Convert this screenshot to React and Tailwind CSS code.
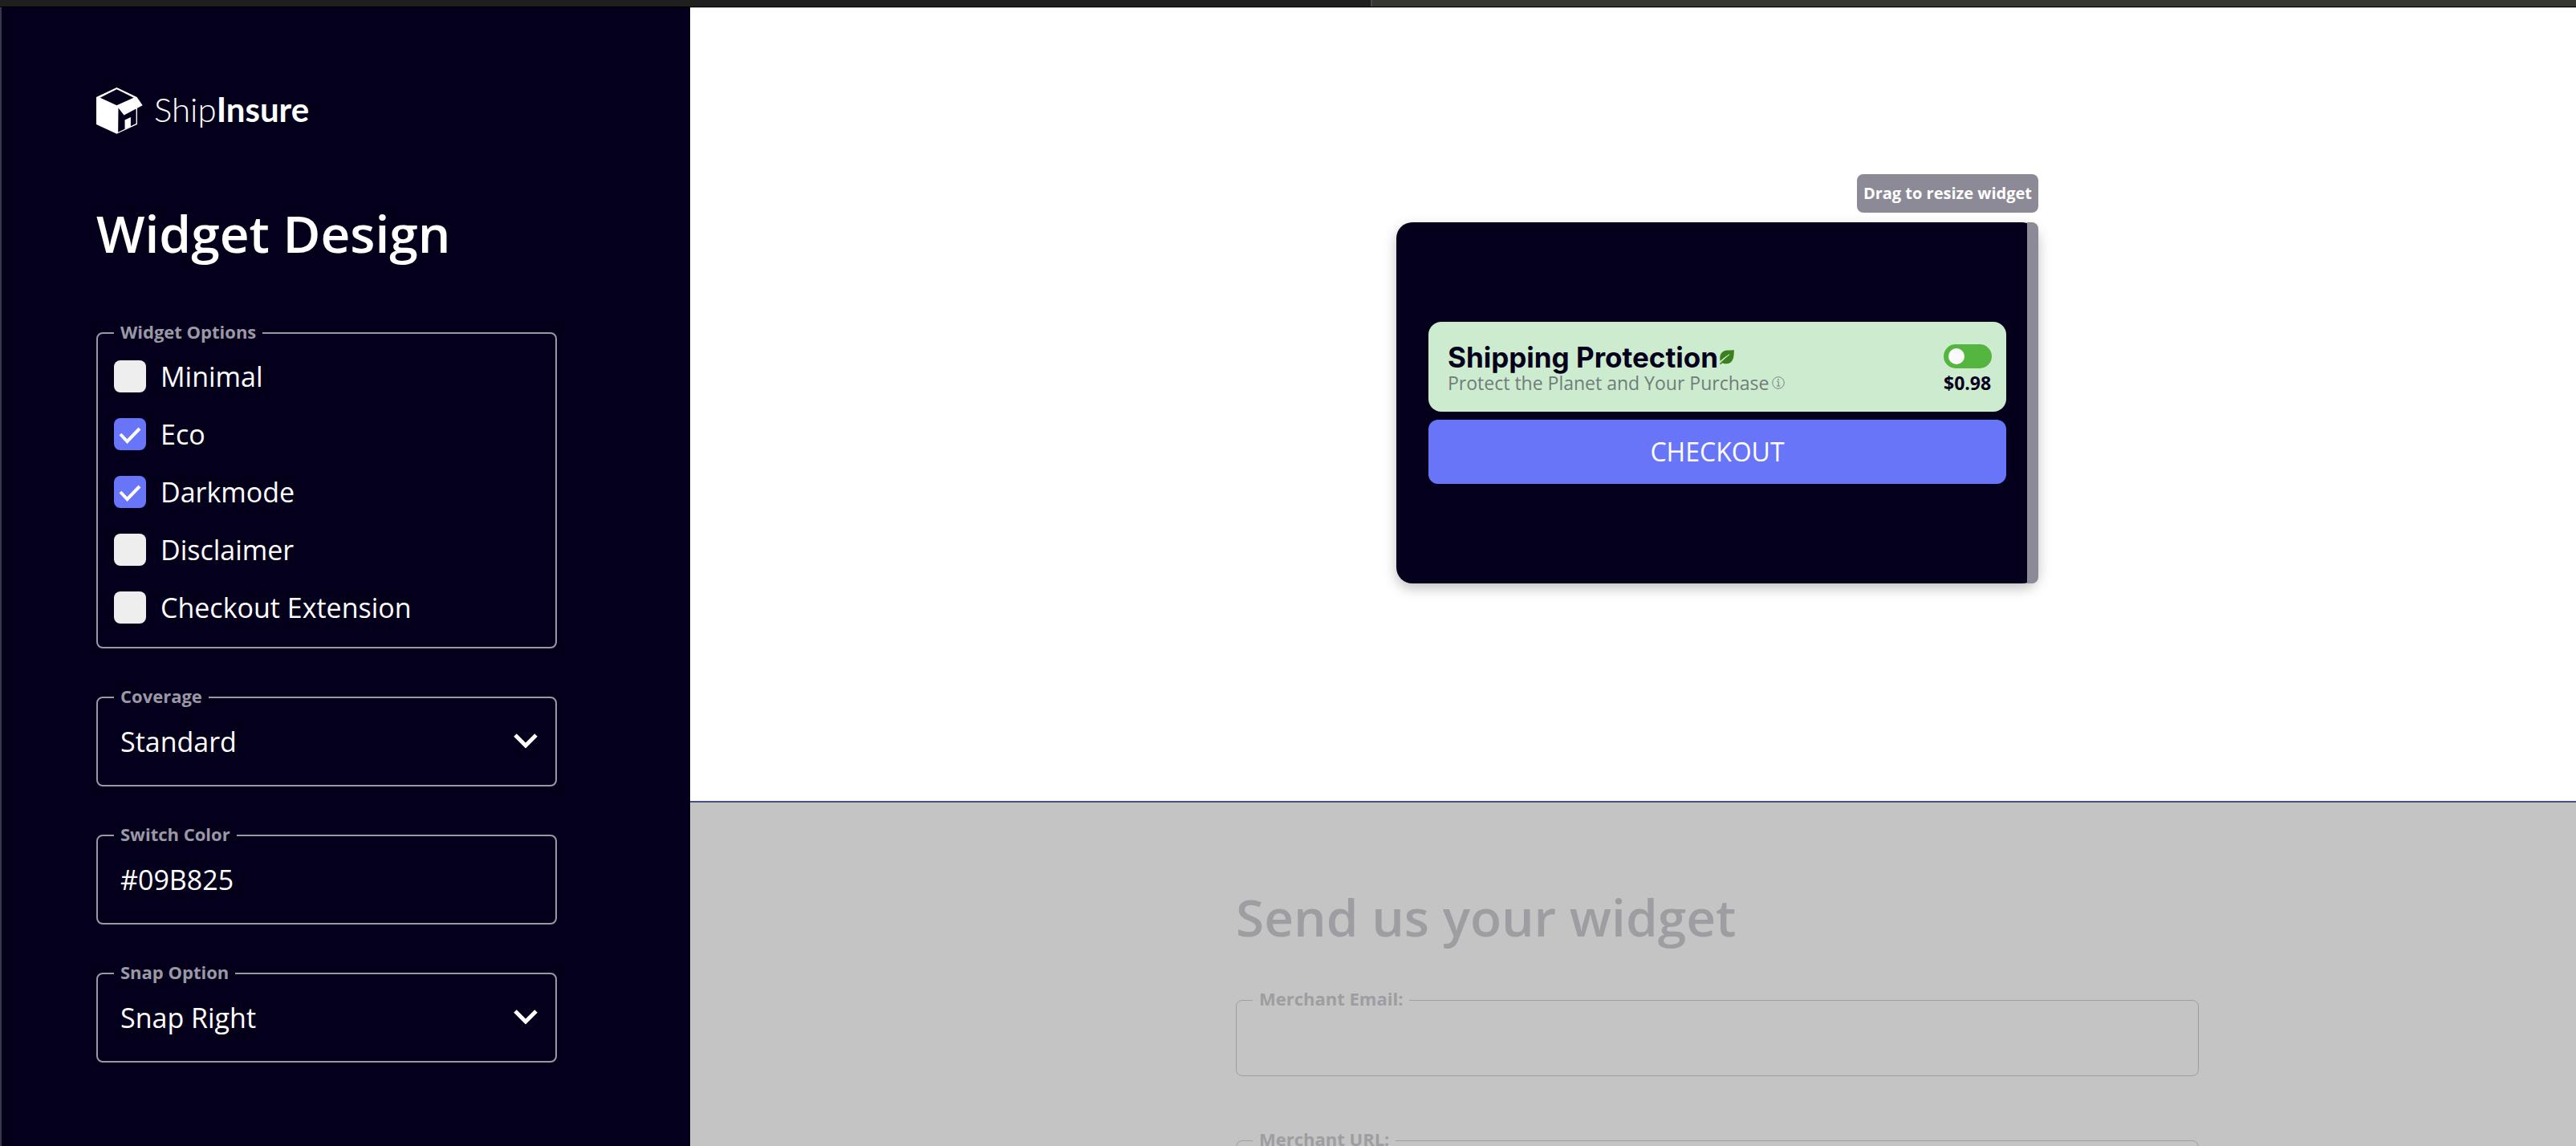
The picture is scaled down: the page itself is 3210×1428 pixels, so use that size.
import React, { useState } from 'react';

const OPTIONS = [
  ['Minimal', false],
  ['Eco', true],
  ['Darkmode', true],
  ['Disclaimer', false],
  ['Checkout Extension', false],
];

function Logo() {
  return (
    <div className="flex items-start gap-3.5">
      <svg viewBox="60 42 173 173" className="h-[58px] w-[58px]" fill="#fff" aria-hidden="true">
        <path
          fillRule="evenodd"
          d="M60 78 136 42 211 78 232 108 163 145 142 118 141 208 208 176 208 121 212 119 212 179 136 214 60 179ZM74 80 136 108 199 80 136 49Z"
        />
        <path d="M166 163 188 152 188 187 166 197Z" />
      </svg>
      <p className="font-['Lato',sans-serif] text-[42px] leading-[54px] font-light text-white">
        Ship<span className="font-bold">Insure</span>
      </p>
    </div>
  );
}

function Legend({ children, dim }) {
  return (
    <legend className={`ml-5 px-2 pb-1 text-[22px] leading-7 font-bold ${dim ? 'text-[#9e9da2]' : 'text-[#9b98a5]'}`}>
      {children}
    </legend>
  );
}

function Group({ label, children }) {
  return (
    <fieldset className="rounded-lg border-2 border-[#9b98a5]">
      <Legend>{label}</Legend>
      {children}
    </fieldset>
  );
}

function Option({ label, initial }) {
  return (
    <label className="grid grid-cols-[40px_1fr] items-center gap-x-[18px] text-[34px] leading-[40px]">
      <input
        type="checkbox"
        defaultChecked={initial}
        className="peer col-start-1 row-start-1 size-10 appearance-none rounded-lg bg-[#eeeeee] checked:bg-[#6975f8]"
      />
      <svg
        viewBox="0 0 40 40"
        className="pointer-events-none invisible col-start-1 row-start-1 size-10 peer-checked:visible"
        fill="none"
        stroke="#fff"
        strokeWidth="4"
        aria-hidden="true"
      >
        <path d="M8 20 16.500 29 32 13" />
      </svg>
      <span>{label}</span>
    </label>
  );
}

const FIELD =
  'w-full appearance-none bg-transparent px-7 text-[34px] leading-[44px] text-white outline-none h-11';

function SelectField({ label, options }) {
  return (
    <Group label={label}>
      <div className="grid items-center pt-[17px] pb-8">
        <select aria-label={label} className={`col-start-1 row-start-1 ${FIELD}`}>
          {options.map((o) => (
            <option key={o} className="text-black">{o}</option>
          ))}
        </select>
        <svg
          viewBox="0 1 30 20"
          className="pointer-events-none col-start-1 row-start-1 mr-[22px] h-5 w-[30px] justify-self-end"
          fill="none"
          stroke="#fff"
          strokeWidth="5"
          aria-hidden="true"
        >
          <path d="M2 3 15 16 28 3" />
        </svg>
      </div>
    </Group>
  );
}

function Sidebar() {
  return (
    <aside className="w-[860px] shrink-0 border-l-2 border-[#393650] bg-[#04001c] pt-[100px] pr-[166px] pl-[118px] text-white">
      <Logo />
      <h1 className="mt-20 text-[64px] leading-[88px] font-semibold">Widget Design</h1>
      <form className="mt-16 flex flex-col gap-[45px]">
        <Group label="Widget Options">
          <div className="flex flex-col gap-8 px-5 pt-[18px] pb-[29px]">
            {OPTIONS.map(([label, on]) => (
              <Option key={label} label={label} initial={on} />
            ))}
          </div>
        </Group>
        <SelectField label="Coverage" options={['Standard', 'Premium']} />
        <Group label="Switch Color">
          <div className="pt-[17px] pb-8">
            <input type="text" aria-label="Switch Color" defaultValue="#09B825" className={`block ${FIELD}`} />
          </div>
        </Group>
        <SelectField label="Snap Option" options={['Snap Right', 'Snap Left', 'Snap Center']} />
      </form>
    </aside>
  );
}

function Leaf() {
  return (
    <svg viewBox="0 0 18 18" className="size-[18px]" aria-hidden="true">
      <path d="M17.800 0C17.800 8 17.600 16.500 8.500 17.300 6.500 17.500 4.500 17 3.300 16.200L1.300 18 0 17.700C-.2 16.900 4.500 11.500 11.500 5.800 8 7.800 3.500 11 .6 14 -1 5.500 3 .8 9.500.5 12.500.4 15.500.6 17.800 0Z" fill="#3a8020" />
      <path d="M.4 15.600C3.800 12.200 7.500 8.800 12 5.600" stroke="#cdebcf" strokeWidth="1.100" fill="none" />
    </svg>
  );
}

function Info() {
  return (
    <svg viewBox="0 0 16 16" className="size-4" fill="none" stroke="#6f7d7b" aria-hidden="true">
      <circle cx="8" cy="8" r="7.300" strokeWidth="0.900" />
      <path d="M6.300 6.500H8.200V12M6 12H10.300" strokeWidth="1" />
      <circle cx="8" cy="4.200" r="0.900" fill="#6f7d7b" stroke="none" />
    </svg>
  );
}

function Widget() {
  const [on, setOn] = useState(false);
  return (
    <div className="relative flex min-h-[450px] w-full max-w-[800px] flex-col justify-center rounded-[20px] bg-[#04001c] px-10 shadow-[0_6px_16px_rgba(0,0,0,0.25)]">
      <div className="absolute right-0 bottom-full mb-3 rounded-lg bg-[#8d8a97] px-2 text-xl leading-[48px] font-bold whitespace-nowrap text-white">
        Drag to resize widget
      </div>
      <div className="absolute inset-y-0 right-0 w-3.5 cursor-ew-resize rounded-r-lg bg-[#8d8a97]" />
      <div className="flex justify-between rounded-2xl bg-[#cdebcf] pt-7 pr-[18px] pb-[18px] pl-6 text-[#04001c]">
        <div>
          <h2 className="flex items-center gap-0.5 font-['Inter',sans-serif] text-[35px] leading-[32px] font-bold">
            Shipping Protection
            <Leaf />
          </h2>
          <p className="flex items-center gap-1 text-[23px] leading-8 text-[#6f7d7b]">
            Protect the Planet and Your Purchase
            <Info />
          </p>
        </div>
        <div className="flex flex-col">
          <input
            type="checkbox"
            role="switch"
            aria-label="Shipping Protection"
            checked={on}
            onChange={() => setOn(!on)}
            className="flex h-[30px] w-[60px] appearance-none items-center rounded-full bg-[#54b53f] px-1.5 before:size-5 before:rounded-full before:bg-[#fafafa] checked:justify-end"
          />
          <p className="text-[23px] leading-9 font-bold">$0.98</p>
        </div>
      </div>
      <button type="button" className="mt-2.5 rounded-xl bg-[#6975f8] text-[32px] leading-[80px] text-white">
        CHECKOUT
      </button>
    </div>
  );
}

function MerchantField({ label, type }) {
  return (
    <fieldset className="rounded-lg border border-[#9f9fa1]">
      <Legend dim>{label}</Legend>
      <input type={type} aria-label={label} disabled className="block h-[78px] w-full bg-transparent px-7 text-[32px]" />
    </fieldset>
  );
}

export default function App() {
  return (
    <div className="flex h-screen flex-col overflow-hidden bg-white font-['Open_Sans',sans-serif]">
      <div className="flex h-[9px] shrink-0 border-b border-black bg-[#1f1f1d]">
        <div className="w-[1708px] shrink-0" />
        <div className="flex-1 border-l-2 border-[#4a4a48] bg-[#363633]" />
      </div>
      <div className="flex min-h-0 flex-1">
        <Sidebar />
        <main className="flex-1 overflow-hidden border-t border-[#b8b8b8]">
          <section className="flex justify-center border-b-2 border-[#44527f] pt-[267px] pb-[271px] pl-[210px]">
            <Widget />
          </section>
          <section className="flex justify-center bg-[#c4c4c4] pt-[99px] pb-20 pl-[210px]">
            <form className="flex w-full max-w-[1200px] flex-col">
              <h2 className="text-[64px] leading-[88px] font-semibold text-[#9e9da2]">Send us your widget</h2>
              <div className="mt-[43px] flex flex-col gap-16">
                <MerchantField label="Merchant Email:" type="email" />
                <MerchantField label="Merchant URL:" type="url" />
              </div>
            </form>
          </section>
        </main>
      </div>
    </div>
  );
}
